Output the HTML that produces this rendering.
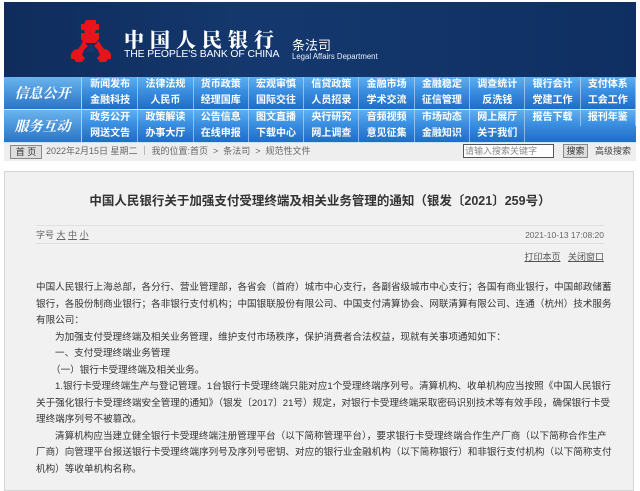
<!DOCTYPE html>
<html><head><meta charset="utf-8">
<style>
*{margin:0;padding:0;box-sizing:border-box}
body{width:640px;height:479px;overflow:hidden;background:#fff;font-family:"Liberation Sans","Noto Sans CJK SC",sans-serif;position:relative}
.hdr{position:absolute;left:4px;top:2px;width:632px;height:75px;background:linear-gradient(90deg,#0f2c5c 0%,#14386e 40%,#0f2f62 100%)}
.cn{position:absolute;left:120px;top:22px;font-family:"Noto Serif CJK SC",serif;font-weight:900;font-size:20px;letter-spacing:6px;color:#fff}
.en{position:absolute;left:120px;top:47px;font-size:10.4px;color:#fff;letter-spacing:-0.1px}
.tf{position:absolute;left:288px;top:33px;font-size:13px;color:#fff}
.la{position:absolute;left:288px;top:50px;font-size:7.8px;color:#e8eef8}
.blk{position:absolute;left:4px;width:632px;height:33px;background:linear-gradient(180deg,#5eaff2 0%,#3a8ee0 45%,#1f6cc6 100%);border-bottom:1px solid #cfe2f5}
.lab{position:absolute;left:0;top:0;width:78px;height:32px;background:linear-gradient(180deg,#6ab4ee,#2a74c6);color:#fff;font-family:"Noto Serif CJK SC",serif;font-style:italic;font-weight:bold;font-size:14px;line-height:32px;text-align:center;border-right:1px solid #a9cff0}
.row{position:absolute;left:79px;height:16px;display:flex}
.row span{width:55.3px;height:16px;text-align:center;color:#fff;font-size:10px;font-weight:bold;line-height:16px;border-right:1px solid rgba(200,225,250,.6);white-space:nowrap;overflow:hidden}
.bc{position:absolute;left:4px;top:143px;width:632px;height:18px;background:#eeeeee;font-size:9px;color:#666;line-height:17px}
.btn{position:absolute;border:1px solid #888;background:#ddd;color:#333;font-size:9px;text-align:center;line-height:12px;height:14px}
.box{position:absolute;left:4px;top:171px;width:630px;height:320px;background:#f1f1f1;border:1px solid #d5d5d5}
.t{position:absolute;left:0;width:640px;top:190px;text-align:center;font-size:12.5px;color:#333;font-weight:bold}
.ln{position:absolute;left:36px;width:568px;height:1px;background:#e0e0e0}
.p{position:absolute;left:36px;width:568px;font-size:9.6px;color:#333;white-space:nowrap;line-height:12px}
.f{text-align:justify;text-align-last:justify}
</style></head><body>
<div class="hdr">
<svg style="position:absolute;left:66px;top:18px" width="42" height="43" viewBox="0 0 42 43">
<g fill="#e8141c">
<path d="M16 0h10v4h3v6h-3l-1 3h4v6l-3 4h-12l-3-4v-6h4l-1-3h-3v-6h3z"/>
<path d="M13 21l5 5-4 4-2 5 3 3-3 4h-6l-2-3h-3l0-5 3-4 4-1 3-4z"/>
<path d="M29 21l-5 5 4 4 2 5-3 3 3 4h6l2-3h3v-5l-3-4-4-1-3-4z"/>
</g>
<path d="M21 24l-5 8h10z" fill="#14386e"/>
</svg>
<div class="cn">中国人民银行</div>
<div class="en">THE PEOPLE'S BANK OF CHINA</div>
<div class="tf">条法司</div>
<div class="la">Legal Affairs Department</div>
</div>

<div class="blk" style="top:77px">
<div class="lab">信息公开</div>
<div class="row" style="top:0"><span>新闻发布</span><span>法律法规</span><span>货币政策</span><span>宏观审慎</span><span>信贷政策</span><span>金融市场</span><span>金融稳定</span><span>调查统计</span><span>银行会计</span><span>支付体系</span></div>
<div class="row" style="top:16px"><span>金融科技</span><span>人民币</span><span>经理国库</span><span>国际交往</span><span>人员招录</span><span>学术交流</span><span>征信管理</span><span>反洗钱</span><span>党建工作</span><span>工会工作</span></div>
</div>
<div class="blk" style="top:110px">
<div class="lab">服务互动</div>
<div class="row" style="top:0"><span>政务公开</span><span>政策解读</span><span>公告信息</span><span>图文直播</span><span>央行研究</span><span>音频视频</span><span>市场动态</span><span>网上展厅</span><span>报告下载</span><span>报刊年鉴</span></div>
<div class="row" style="top:16px"><span>网送文告</span><span>办事大厅</span><span>在线申报</span><span>下载中心</span><span>网上调查</span><span>意见征集</span><span>金融知识</span><span>关于我们</span></div>
</div>

<div class="bc">
<div class="btn" style="left:6px;top:2px;width:32px">首 页</div>
<span style="position:absolute;left:42px;top:0">2022年2月15日 星期二 ｜ 我的位置:首页 &nbsp;&gt;&nbsp; 条法司 &nbsp;&gt;&nbsp; 规范性文件</span>
<div style="position:absolute;left:459px;top:1px;width:91px;height:14px;border:1px solid #555;background:#fff;font-size:9px;line-height:12px;color:#888;padding-left:1px">请输入搜索关键字</div>
<div class="btn" style="left:559px;top:1px;width:25px">搜索</div>
<span style="position:absolute;left:591px;top:0;color:#444">高级搜索</span>
</div>

<div class="box"></div>
<div class="t">中国人民银行关于加强支付受理终端及相关业务管理的通知（银发〔2021〕259号）</div>
<div class="ln" style="top:225px"></div>
<div class="p" style="top:229px;font-size:9px;color:#666">字号 <u>大</u> <u>中</u> <u>小</u></div>
<div class="p" style="top:229px;font-size:8.5px;color:#666;text-align:right">2021-10-13 17:08:20</div>
<div class="ln" style="top:243px"></div>
<div class="p" style="top:251px;font-size:9px;color:#555;text-align:right"><u>打印本页</u> &nbsp; <u>关闭窗口</u></div>

<div class="p f" style="top:282px">中国人民银行上海总部，各分行、营业管理部，各省会（首府）城市中心支行，各副省级城市中心支行；各国有商业银行，中国邮政储蓄</div>
<div class="p f" style="top:298.5px">银行，各股份制商业银行；各非银行支付机构；中国银联股份有限公司、中国支付清算协会、网联清算有限公司、连通（杭州）技术服务</div>
<div class="p" style="top:315px">有限公司：</div>
<div class="p" style="top:331.5px;padding-left:19px">为加强支付受理终端及相关业务管理，维护支付市场秩序，保护消费者合法权益，现就有关事项通知如下：</div>
<div class="p" style="top:348px;padding-left:19px">一、支付受理终端业务管理</div>
<div class="p" style="top:364.5px;padding-left:15px">（一）银行卡受理终端及相关业务。</div>
<div class="p f" style="top:381px;padding-left:19px">1.银行卡受理终端生产与登记管理。1台银行卡受理终端只能对应1个受理终端序列号。清算机构、收单机构应当按照《中国人民银行</div>
<div class="p f" style="top:397.5px">关于强化银行卡受理终端安全管理的通知》（银发〔2017〕21号）规定，对银行卡受理终端采取密码识别技术等有效手段，确保银行卡受</div>
<div class="p" style="top:414px">理终端序列号不被篡改。</div>
<div class="p f" style="top:430.5px;padding-left:19px">清算机构应当建立健全银行卡受理终端注册管理平台（以下简称管理平台），要求银行卡受理终端合作生产厂商（以下简称合作生产</div>
<div class="p f" style="top:447px">厂商）向管理平台报送银行卡受理终端序列号及序列号密钥、对应的银行业金融机构（以下简称银行）和非银行支付机构（以下简称支付</div>
<div class="p" style="top:463.5px">机构）等收单机构名称。</div>
</body></html>
